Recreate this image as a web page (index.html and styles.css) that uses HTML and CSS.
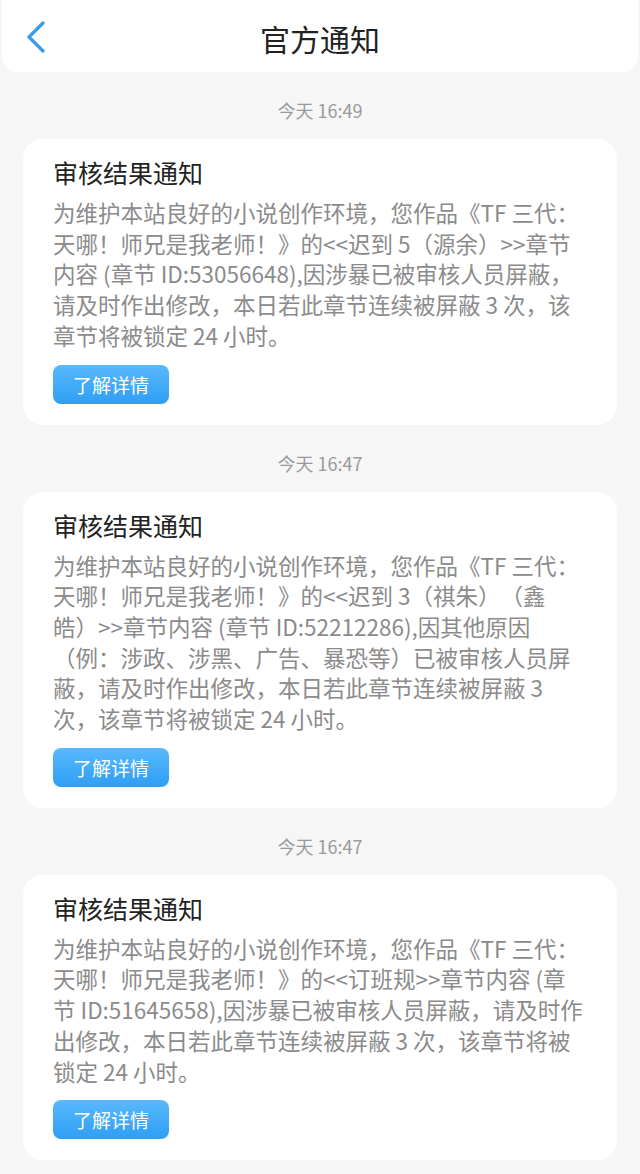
FILE: index.html
```html
<!DOCTYPE html>
<html lang="zh-CN">
<head>
<meta charset="utf-8">
<title>官方通知</title>
<link rel="stylesheet" href="styles.css">
</head>
<body>
<header class="topbar">
  <a class="back" aria-label="返回">
    <svg width="20" height="32" viewBox="0 0 20 32"><path d="M17 2 L3 16 L17 30" fill="none" stroke="#3a9ce9" stroke-width="3.2" stroke-linecap="round" stroke-linejoin="round"/></svg>
  </a>
  <h1 class="title">官方通知</h1>
  <span></span>
</header>
<main class="list">
  <div class="time">今天 16:49</div>
  <section class="card">
    <h2 class="card-title">审核结果通知</h2>
    <p class="card-body">为维护本站良好的小说创作环境，您作品《TF 三代：天哪！师兄是我老师！》的&lt;&lt;迟到 5（源余）&gt;&gt;章节内容 (章节 ID:53056648),因涉暴已被审核人员屏蔽，请及时作出修改，本日若此章节连续被屏蔽 3 次，该章节将被锁定 24 小时。</p>
    <button class="btn">了解详情</button>
  </section>
  <div class="time">今天 16:47</div>
  <section class="card">
    <h2 class="card-title">审核结果通知</h2>
    <p class="card-body">为维护本站良好的小说创作环境，您作品《TF 三代：天哪！师兄是我老师！》的&lt;&lt;迟到 3（祺朱）（鑫皓）&gt;&gt;章节内容 (章节 ID:52212286),因其他原因（例：涉政、涉黑、广告、暴恐等）已被审核人员屏蔽，请及时作出修改，本日若此章节连续被屏蔽 3 次，该章节将被锁定 24 小时。</p>
    <button class="btn">了解详情</button>
  </section>
  <div class="time">今天 16:47</div>
  <section class="card">
    <h2 class="card-title">审核结果通知</h2>
    <p class="card-body">为维护本站良好的小说创作环境，您作品《TF 三代：天哪！师兄是我老师！》的&lt;&lt;订班规&gt;&gt;章节内容 (章节 ID:51645658),因涉暴已被审核人员屏蔽，请及时作出修改，本日若此章节连续被屏蔽 3 次，该章节将被锁定 24 小时。</p>
    <button class="btn">了解详情</button>
  </section>
</main>
</body>
</html>
```
FILE: styles.css
```css
* { box-sizing: border-box; }
html, body { margin: 0; padding: 0; }
body {
  background: #f6f6f6;
  font-family: "Noto Sans CJK SC", "Noto Sans", sans-serif;
  width: 640px;
  min-height: 1174px;
  text-spacing-trim: space-all;
}
.topbar {
  margin: 0 2px;
  height: 72px;
  background: #fff;
  border-radius: 0 0 16px 16px;
  display: grid;
  grid-template-columns: 1fr auto 1fr;
  align-items: center;
}
.back {
  display: flex;
  align-items: center;
  padding-left: 24px;
  padding-top: 2px;
}
.back svg { display: block; }
.title {
  margin: 0;
  font-size: 30px;
  font-weight: 400;
  color: #222;
  line-height: 40px;
  padding-top: 4px;
}
.list {
  padding: 0 23px;
}
.time {
  text-align: center;
  color: #9a9a9a;
  font-size: 18px;
  line-height: 24px;
  padding: 26px 0 17px;
}
.card {
  background: #fff;
  border-radius: 20px;
  padding: 16px 34px 21px 30px;
}
.card-title {
  margin: 0;
  font-size: 25px;
  font-weight: 400;
  color: #222;
  line-height: 35px;
}
.card-body {
  margin: 7px 0 14px;
  font-size: 22.5px;
  line-height: 30.7px;
  color: #8b8b8b;
}
.btn {
  display: block;
  width: 116px;
  height: 39px;
  border: none;
  border-radius: 8px;
  background: linear-gradient(#59b9fb, #2e9ef5);
  color: #fff;
  font-family: inherit;
  font-size: 19px;
  padding: 0;
  margin: 0;
}
```
